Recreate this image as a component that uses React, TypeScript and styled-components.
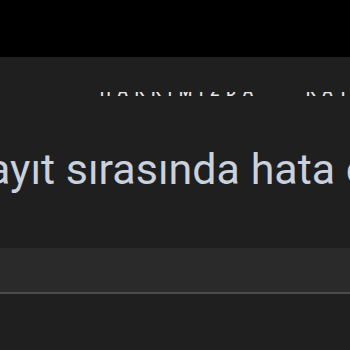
import React from 'react';
import styled, { createGlobalStyle } from 'styled-components';

const Global = createGlobalStyle`
  html, body {
    margin: 0;
    padding: 0;
    background: #1f1f1f;
    font-family: Roboto, "Noto Sans", "Liberation Sans", sans-serif;
  }
  #root {
    width: 350px;
    height: 350px;
    overflow: hidden;
  }
`;

const Page = styled.div`
  display: flex;
  flex-direction: column;
  width: 350px;
  height: 350px;
  background: #1f1f1f;
  overflow: hidden;
`;

const TopBar = styled.div`
  height: 57px;
  flex-shrink: 0;
  background: #000;
`;

const NavClip = styled.div`
  height: 4px;
  margin-top: 35px;
  overflow: hidden;
  flex-shrink: 0;
`;

const NavRow = styled.nav`
  display: flex;
  gap: 46px;
  padding-left: 100px;
  margin-top: -8px;
  white-space: nowrap;
`;

const NavItem = styled.span`
  color: #e6e6e6;
  font-size: 15px;
  line-height: 14px;
  font-weight: 500;
  letter-spacing: 7px;
  text-transform: uppercase;
`;

const Message = styled.div`
  margin-top: 48px;
  height: 50px;
  flex-shrink: 0;
  display: flex;
  align-items: center;
  white-space: nowrap;
`;

const MessageText = styled.span`
  margin-left: -40px;
  color: #c9d1de;
  font-size: 43px;
  line-height: 50px;
`;

const Band = styled.div`
  margin-top: 54px;
  height: 44px;
  flex-shrink: 0;
  background: #2a2a2a;
  border-bottom: 2px solid #4a4a4a;
`;

export default function App() {
  return (
    <Page>
      <Global />
      <TopBar />
      <NavClip>
        <NavRow>
          <NavItem>Hakkımızda</NavItem>
          <NavItem>Kayıt</NavItem>
        </NavRow>
      </NavClip>
      <Message>
        <MessageText>Kayıt sırasında hata oluştu</MessageText>
      </Message>
      <Band />
    </Page>
  );
}
